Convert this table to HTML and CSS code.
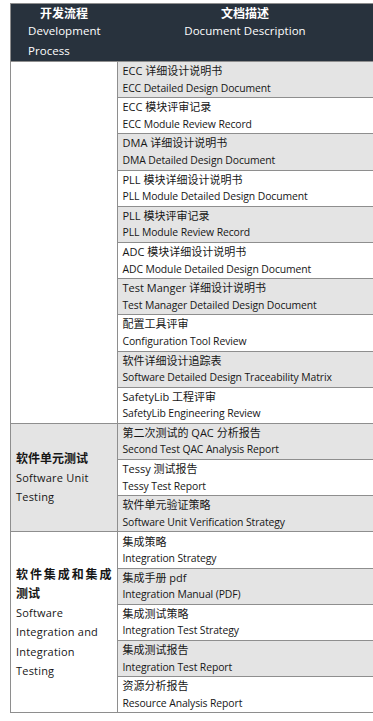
FILE: index.html
```html
<!DOCTYPE html>
<html lang="zh">
<head>
<meta charset="utf-8">
<title>开发流程 文档描述</title>
<link rel="stylesheet" href="styles.css">
</head>
<body>
<table class="doc-table">
  <thead>
    <tr>
      <th class="col-process">
        <div class="h-zh">开发流程</div>
        <div class="h-en h-en-left">Development<br>Process</div>
      </th>
      <th class="col-doc">
        <div class="h-zh">文档描述</div>
        <div class="h-en">Document Description</div>
      </th>
    </tr>
  </thead>
  <tbody>
    <tr class="alt">
      <td class="proc" rowspan="10"></td>
      <td class="doc"><div class="zh">ECC 详细设计说明书</div><div class="en">ECC Detailed Design Document</div></td>
    </tr>
    <tr><td class="doc"><div class="zh">ECC 模块评审记录</div><div class="en">ECC Module Review Record</div></td></tr>
    <tr class="alt"><td class="doc"><div class="zh">DMA 详细设计说明书</div><div class="en">DMA Detailed Design Document</div></td></tr>
    <tr><td class="doc"><div class="zh">PLL 模块详细设计说明书</div><div class="en">PLL Module Detailed Design Document</div></td></tr>
    <tr class="alt"><td class="doc"><div class="zh">PLL 模块评审记录</div><div class="en">PLL Module Review Record</div></td></tr>
    <tr><td class="doc"><div class="zh">ADC 模块详细设计说明书</div><div class="en">ADC Module Detailed Design Document</div></td></tr>
    <tr class="alt"><td class="doc"><div class="zh">Test Manger 详细设计说明书</div><div class="en">Test Manager Detailed Design Document</div></td></tr>
    <tr><td class="doc"><div class="zh">配置工具评审</div><div class="en">Configuration Tool Review</div></td></tr>
    <tr class="alt"><td class="doc"><div class="zh">软件详细设计追踪表</div><div class="en">Software Detailed Design Traceability Matrix</div></td></tr>
    <tr><td class="doc"><div class="zh">SafetyLib 工程评审</div><div class="en">SafetyLib Engineering Review</div></td></tr>

    <tr class="alt">
      <td class="proc proc-alt" rowspan="3">
        <p class="p-zh">软件单元测试</p>
        <p class="p-en">Software Unit Testing</p>
      </td>
      <td class="doc"><div class="zh">第二次测试的 QAC 分析报告</div><div class="en">Second Test QAC Analysis Report</div></td>
    </tr>
    <tr><td class="doc"><div class="zh">Tessy 测试报告</div><div class="en">Tessy Test Report</div></td></tr>
    <tr class="alt"><td class="doc"><div class="zh">软件单元验证策略</div><div class="en">Software Unit Verification Strategy</div></td></tr>

    <tr>
      <td class="proc" rowspan="5">
        <p class="p-zh">软件集成和集成测试</p>
        <p class="p-en">Software Integration and Integration Testing</p>
      </td>
      <td class="doc"><div class="zh">集成策略</div><div class="en">Integration Strategy</div></td>
    </tr>
    <tr class="alt"><td class="doc"><div class="zh">集成手册 pdf</div><div class="en">Integration Manual (PDF)</div></td></tr>
    <tr><td class="doc"><div class="zh">集成测试策略</div><div class="en">Integration Test Strategy</div></td></tr>
    <tr class="alt"><td class="doc"><div class="zh">集成测试报告</div><div class="en">Integration Test Report</div></td></tr>
    <tr><td class="doc"><div class="zh">资源分析报告</div><div class="en">Resource Analysis Report</div></td></tr>
  </tbody>
</table>
</body>
</html>
```
FILE: styles.css
```css
html, body {
  margin: 0;
  padding: 0;
  background: #ffffff;
}

body {
  font-family: "Open Sans", "Noto Sans CJK SC", sans-serif;
  color: #161616;
}

.doc-table {
  margin: 3px 0 0 10px;
  width: 362px;
  border-collapse: collapse;
  table-layout: fixed;
}

.doc-table th,
.doc-table td {
  border: 1px solid #8e8e8e;
  padding: 0;
}

.col-process { width: 106px; }
.col-doc { width: 256px; }

.doc-table thead th {
  background: #28323d;
  color: #ffffff;
  vertical-align: top;
  font-weight: normal;
  text-align: center;
  border-left: none;
  border-right: none;
}

.doc-table thead th.col-process { border-left: 1px solid #8e8e8e; }
.doc-table thead th.col-doc { border-right: 1px solid #8e8e8e; }

.h-zh {
  font-family: "Noto Sans CJK SC", sans-serif;
  font-weight: bold;
  font-size: 12px;
  line-height: 17px;
}

.h-en {
  font-size: 11.5px;
  line-height: 20px;
  letter-spacing: 0.05px;
}

.h-en-left {
  text-align: left;
  padding-left: 17px;
}

tbody tr.alt td.doc { background: #e4e4e4; }

td.doc {
  height: 35.2px;
  padding: 0 5px;
  vertical-align: middle;
  font-size: 10px;
  white-space: nowrap;
}

.zh {
  font-family: "Open Sans", "Noto Sans CJK SC", sans-serif;
  font-size: 11px;
  line-height: 17.5px;
}

.en {
  font-size: 10.4px;
  line-height: 17.5px;
  letter-spacing: -0.1px;
}

td.proc {
  background: #ffffff;
  vertical-align: middle;
  padding: 0 5px;
}

td.proc-alt { background: #e4e4e4; }

.p-zh {
  margin: 0;
  font-family: "Noto Sans CJK SC", sans-serif;
  font-weight: bold;
  font-size: 12px;
  line-height: 19.5px;
  text-align: justify;
}

.p-en {
  margin: 0;
  font-size: 11px;
  line-height: 19.5px;
  letter-spacing: 0.2px;
}
```
